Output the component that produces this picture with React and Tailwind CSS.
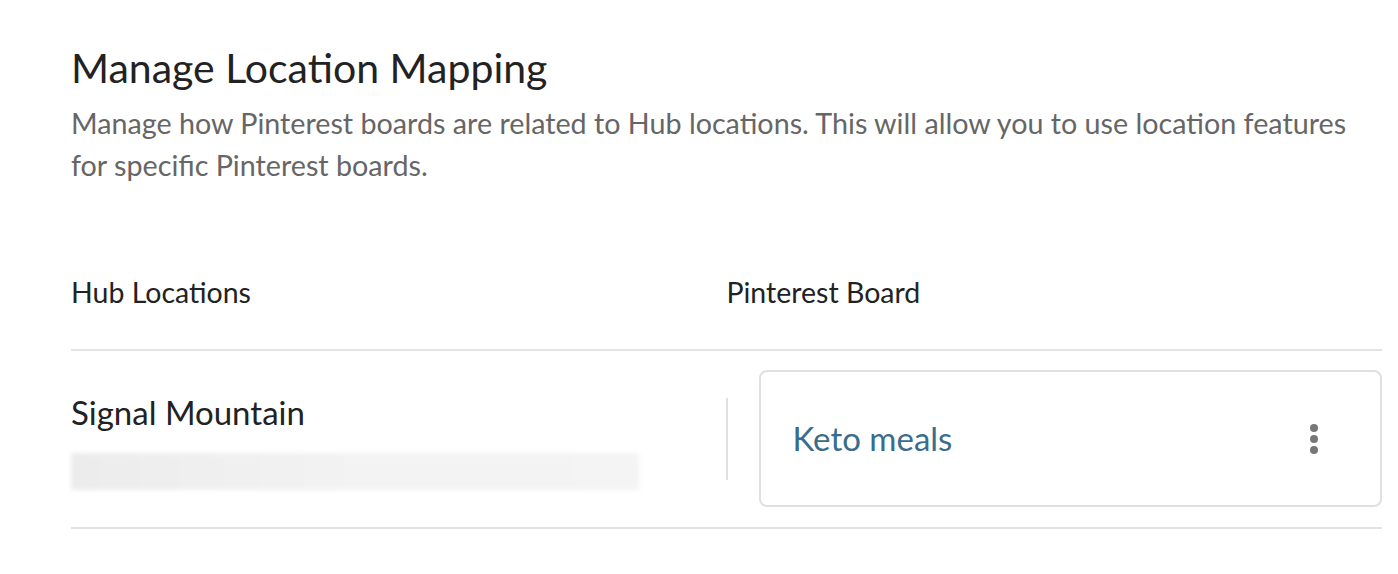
export default function App() {
  return (
    <div className="bg-white w-[1398px] h-[574px] overflow-hidden" style={{ fontFamily: 'Lato, "Open Sans", sans-serif' }}>
      <div className="pl-[71px] pr-[16px] pt-[44px]">
        <h1 className="text-[41px] leading-[48px] text-[#222]">Manage Location Mapping</h1>
        <p className="mt-[10px] text-[28.7px] leading-[42px] text-[#666] w-[1300px]">
          Manage how Pinterest boards are related to Hub locations. This will allow you to use location features for specific Pinterest boards.
        </p>
        <div className="mt-[90px] grid grid-cols-2 text-[28.5px] leading-[32px] text-[#222] pb-[41px] border-b-2 border-[#e3e3e3]">
          <div>Hub Locations</div>
          <div>Pinterest Board</div>
        </div>
        <div className="grid grid-cols-2 border-b-2 border-[#e3e3e3] pt-[19px] pb-[20px]">
          <div className="flex flex-col pt-[20px]">
            <div className="text-[33px] leading-[44px] text-[#222]">Signal Mountain</div>
            <div className="mt-[19px] h-[37px] w-[568px] bg-gradient-to-r from-[#ececec] via-[#f3f3f3] to-[#f4f4f4] blur-[2px]" />
          </div>
          <div className="flex items-start -ml-[1px]">
            <div className="w-[2px] h-[82px] bg-[#e0e0e0] mt-[28px]" />
            <div className="ml-[31px] flex-1 h-[137px] border-2 border-[#e0e0e0] rounded-[8px] flex items-center justify-between pl-[32px] pr-[62px]">
              <span className="text-[33px] text-[#3a6c8c]">Keto meals</span>
              <div className="flex flex-col gap-[3px]">
                <span className="w-[8px] h-[8px] rounded-full bg-[#777]" />
                <span className="w-[8px] h-[8px] rounded-full bg-[#777]" />
                <span className="w-[8px] h-[8px] rounded-full bg-[#777]" />
              </div>
            </div>
          </div>
        </div>
      </div>
    </div>
  );
}
